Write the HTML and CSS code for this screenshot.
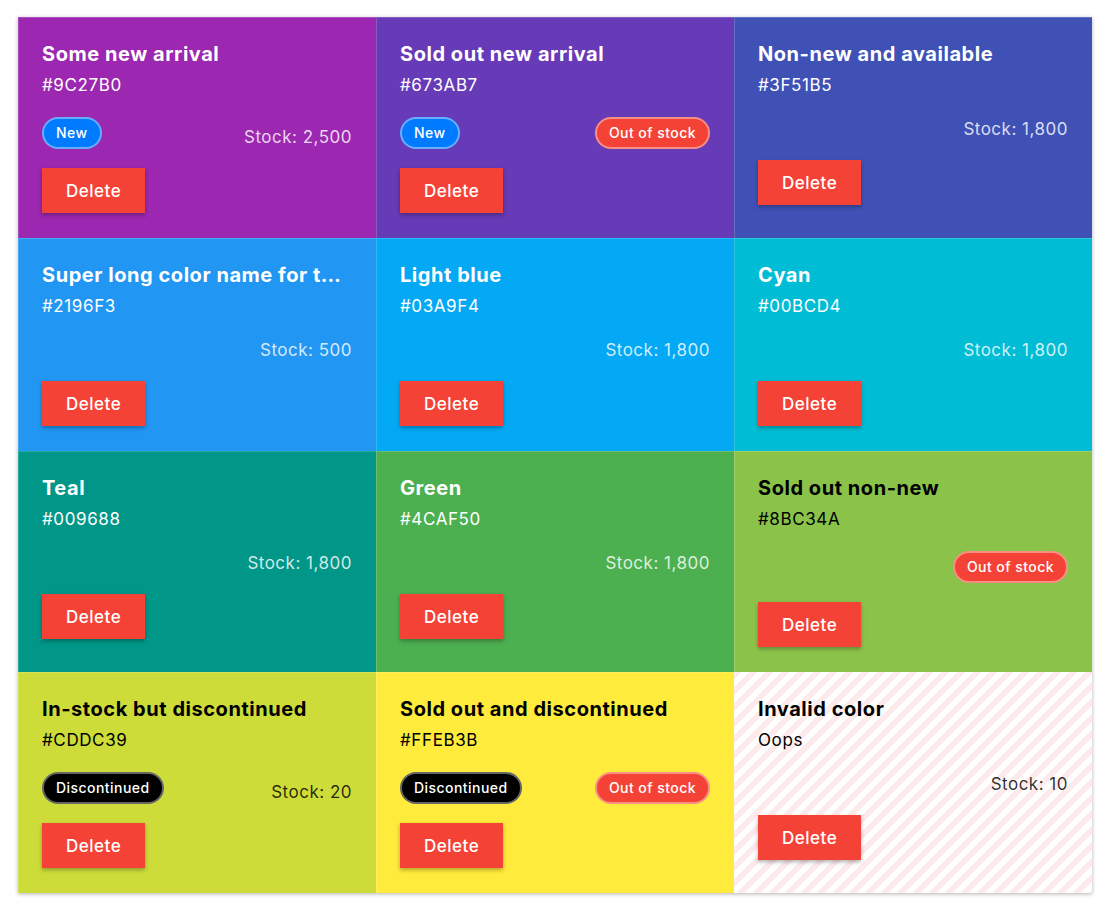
FILE: index.html
```html
<!DOCTYPE html>
<html>
<head>
<meta charset="utf-8">
<link rel="stylesheet" href="styles.css">
</head>
<body>
<div class="grid">
  <div class="card dark" style="background:#9C27B0">
    <div class="title">Some new arrival</div>
    <div class="hex">#9C27B0</div>
    <div class="meta"><span class="badge new">New</span><span class="stock">Stock: 2,500</span></div>
    <button class="delete">Delete</button>
  </div>
  <div class="card dark" style="background:#673AB7">
    <div class="title">Sold out new arrival</div>
    <div class="hex">#673AB7</div>
    <div class="meta"><span class="badge new">New</span><span class="badge oos right">Out of stock</span></div>
    <button class="delete">Delete</button>
  </div>
  <div class="card dark" style="background:#3F51B5">
    <div class="title">Non-new and available</div>
    <div class="hex">#3F51B5</div>
    <div class="meta"><span class="stock">Stock: 1,800</span></div>
    <button class="delete">Delete</button>
  </div>
  <div class="card dark" style="background:#2196F3">
    <div class="title">Super long color name for testing truncation</div>
    <div class="hex">#2196F3</div>
    <div class="meta"><span class="stock">Stock: 500</span></div>
    <button class="delete">Delete</button>
  </div>
  <div class="card dark" style="background:#03A9F4">
    <div class="title">Light blue</div>
    <div class="hex">#03A9F4</div>
    <div class="meta"><span class="stock">Stock: 1,800</span></div>
    <button class="delete">Delete</button>
  </div>
  <div class="card dark" style="background:#00BCD4">
    <div class="title">Cyan</div>
    <div class="hex">#00BCD4</div>
    <div class="meta"><span class="stock">Stock: 1,800</span></div>
    <button class="delete">Delete</button>
  </div>
  <div class="card dark" style="background:#009688">
    <div class="title">Teal</div>
    <div class="hex">#009688</div>
    <div class="meta"><span class="stock">Stock: 1,800</span></div>
    <button class="delete">Delete</button>
  </div>
  <div class="card dark" style="background:#4CAF50">
    <div class="title">Green</div>
    <div class="hex">#4CAF50</div>
    <div class="meta"><span class="stock">Stock: 1,800</span></div>
    <button class="delete">Delete</button>
  </div>
  <div class="card light" style="background:#8BC34A">
    <div class="title">Sold out non-new</div>
    <div class="hex">#8BC34A</div>
    <div class="meta"><span class="badge oos right">Out of stock</span></div>
    <button class="delete">Delete</button>
  </div>
  <div class="card light" style="background:#CDDC39">
    <div class="title">In-stock but discontinued</div>
    <div class="hex">#CDDC39</div>
    <div class="meta"><span class="badge disc">Discontinued</span><span class="stock">Stock: 20</span></div>
    <button class="delete">Delete</button>
  </div>
  <div class="card light" style="background:#FFEB3B">
    <div class="title">Sold out and discontinued</div>
    <div class="hex">#FFEB3B</div>
    <div class="meta"><span class="badge disc">Discontinued</span><span class="badge oos right">Out of stock</span></div>
    <button class="delete">Delete</button>
  </div>
  <div class="card light invalid">
    <div class="title">Invalid color</div>
    <div class="hex">Oops</div>
    <div class="meta"><span class="stock">Stock: 10</span></div>
    <button class="delete">Delete</button>
  </div>
</div>
</body>
</html>
```

FILE: styles.css
```css
* { box-sizing: border-box; }
html, body { margin: 0; background: #fff; }
body {
  padding: 17px 18px;
  font-family: Inter, "Noto Sans", "Liberation Sans", sans-serif;
}
.grid {
  display: grid;
  grid-template-columns: repeat(3, 1fr);
  width: 1074px;
  box-shadow: 0 1px 4px rgba(0, 0, 0, 0.3);
}
.card {
  padding: 25px 24px;
  min-width: 0;
  box-shadow: inset 1px 1px 0 rgba(255, 255, 255, 0.18);
  display: flex;
  flex-direction: column;
  align-items: flex-start;
}
.card.dark { color: #fff; }
.card.light { color: #000; }
.title {
  font-size: 20px;
  font-weight: 700;
  line-height: 24px;
  white-space: nowrap;
  overflow: hidden;
  text-overflow: ellipsis;
  width: 100%;
  letter-spacing: 0.55px;
}
.hex {
  margin-top: 6px;
  font-size: 17px;
  line-height: 26px;
  letter-spacing: 0.6px;
}
.meta {
  margin-top: 19px;
  width: 100%;
  display: flex;
  align-items: flex-end;
  gap: 8px;
}
.stock {
  margin-left: auto;
  font-size: 17px;
  line-height: 24px;
  letter-spacing: 0.5px;
}
.dark .stock { color: rgba(255, 255, 255, 0.82); }
.light .stock { color: rgba(0, 0, 0, 0.82); }
.badge {
  height: 32px;
  line-height: 28px;
  padding: 0 12px;
  border-radius: 16px;
  border: 2px solid rgba(255, 255, 255, 0.4);
  font-size: 14px;
  font-weight: 500;
  letter-spacing: 0.45px;
  color: #fff;
  white-space: nowrap;
}
.badge.right { margin-left: auto; }
.badge.new { background: #007aff; }
.badge.oos { background: #f44336; }
.badge.disc { background: #000; }
.delete {
  margin-top: 19px;
  height: 45px;
  padding: 0 24px;
  border: none;
  background: #f44336;
  color: #fff;
  font-family: inherit;
  font-size: 17px;
  font-weight: 500;
  letter-spacing: 0.5px;
  box-shadow: 0 2px 4px rgba(0, 0, 0, 0.3);
}
.invalid {
  background: repeating-linear-gradient(135deg, #fdeaea 0, #fdeaea 5.6px, #ffffff 5.6px, #ffffff 11.3px);
}
```
